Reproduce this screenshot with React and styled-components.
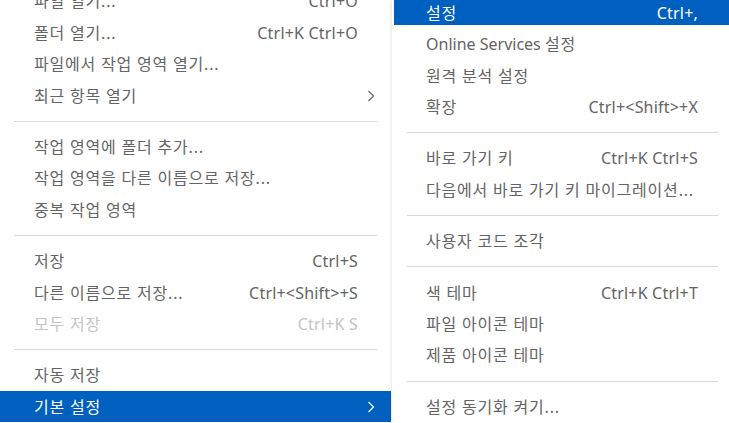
import styled, { createGlobalStyle } from "styled-components";

const GlobalStyle = createGlobalStyle`
  html, body {
    margin: 0;
    padding: 0;
    background: #ffffff;
    overflow: hidden;
  }
`;

const ROW = 31.4;

const leftItems = [
  { label: "파일 열기...", key: "Ctrl+O" },
  { label: "폴더 열기...", key: "Ctrl+K Ctrl+O" },
  { label: "파일에서 작업 영역 열기..." },
  { label: "최근 항목 열기", sub: true },
  { sep: true },
  { label: "작업 영역에 폴더 추가..." },
  { label: "작업 영역을 다른 이름으로 저장..." },
  { label: "중복 작업 영역" },
  { sep: true },
  { label: "저장", key: "Ctrl+S" },
  { label: "다른 이름으로 저장...", key: "Ctrl+<Shift>+S" },
  { label: "모두 저장", key: "Ctrl+K S", disabled: true },
  { sep: true },
  { label: "자동 저장" },
  { label: "기본 설정", sub: true, active: true },
];

const rightItems = [
  { label: "설정", key: "Ctrl+,", active: true, cut: true },
  { latin: "Online Services ", label: "설정" },
  { label: "원격 분석 설정" },
  { label: "확장", key: "Ctrl+<Shift>+X" },
  { sep: true },
  { label: "바로 가기 키", key: "Ctrl+K Ctrl+S" },
  { label: "다음에서 바로 가기 키 마이그레이션..." },
  { sep: true },
  { label: "사용자 코드 조각" },
  { sep: true },
  { label: "색 테마", key: "Ctrl+K Ctrl+T" },
  { label: "파일 아이콘 테마" },
  { label: "제품 아이콘 테마" },
  { sep: true },
  { label: "설정 동기화 켜기..." },
];

function Chevron() {
  return (
    <svg width="8" height="12" viewBox="0 0 8 12">
      <polyline
        points="1.5,1 6.5,6 1.5,11"
        fill="none"
        stroke="currentColor"
        strokeWidth="1.2"
      />
    </svg>
  );
}

function Menu({ items, pad, sepInset, top }) {
  return (
    <List style={{ marginTop: top }}>
      {items.map((it, i) =>
        it.sep ? (
          <Separator key={i} $inset={sepInset} />
        ) : (
          <Item
            key={i}
            $active={it.active}
            $cut={it.cut}
            $disabled={it.disabled}
          >
            <Label $pad={pad}>
              {it.latin && <Latin>{it.latin}</Latin>}
              {it.label}
            </Label>
            {it.key && <Shortcut>{it.key}</Shortcut>}
            <SubSlot>{it.sub && <Chevron />}</SubSlot>
          </Item>
        )
      )}
    </List>
  );
}

export default function App() {
  return (
    <>
      <GlobalStyle />
      <Screen>
        <LeftPanel>
          <Menu items={leftItems} pad={34} sepInset={14} top={-14.3} />
        </LeftPanel>
        <RightPanel>
          <Menu items={rightItems} pad={32} sepInset={13} top={-2.8} />
        </RightPanel>
      </Screen>
    </>
  );
}

const Screen = styled.div`
  display: flex;
  width: 729px;
  height: 423px;
  overflow: hidden;
  background: #ffffff;
  font-family: "Noto Sans", "Noto Sans CJK KR", sans-serif;
  font-size: 16px;
`;

const LeftPanel = styled.div`
  width: 391px;
  flex-shrink: 0;
  background: #ffffff;
`;

const RightPanel = styled.div`
  width: 337px;
  flex-shrink: 0;
  margin-left: 1px;
  padding-left: 2px;
  background: #ffffff;
  box-shadow: 0 0 4px rgba(0, 0, 0, 0.16);
  position: relative;
  z-index: 1;
`;

const List = styled.div`
  display: flex;
  flex-direction: column;
  width: 337px;
  ${LeftPanel} & {
    width: 391px;
  }
`;

const Item = styled.div`
  display: flex;
  align-items: center;
  height: ${ROW}px;
  flex-shrink: 0;
  white-space: nowrap;
  color: ${(p) =>
    p.$active ? "#ffffff" : p.$disabled ? "#c4c4c4" : "#646464"};
  background: ${(p) =>
    p.$active
      ? p.$cut
        ? "linear-gradient(to bottom, #0060c0 calc(100% - 4px), transparent calc(100% - 4px))"
        : "#0060c0"
      : "transparent"};
`;

const Label = styled.span`
  flex: 1;
  padding-left: ${(p) => p.$pad}px;
  letter-spacing: 0.8px;
  line-height: 1;
`;

const Latin = styled.span`
  letter-spacing: 0;
`;

const Shortcut = styled.span`
  letter-spacing: 0.2px;
  line-height: 1;
`;

const SubSlot = styled.span`
  width: 33px;
  flex-shrink: 0;
  display: flex;
  align-items: center;
  padding-left: 9px;
  box-sizing: border-box;
  color: inherit;
`;

const Separator = styled.div`
  height: 20px;
  flex-shrink: 0;
  display: flex;
  align-items: center;
  padding: 0 ${(p) => p.$inset}px;
  &::after {
    content: "";
    flex: 1;
    height: 1px;
    background: #d9d9d9;
  }
`;
